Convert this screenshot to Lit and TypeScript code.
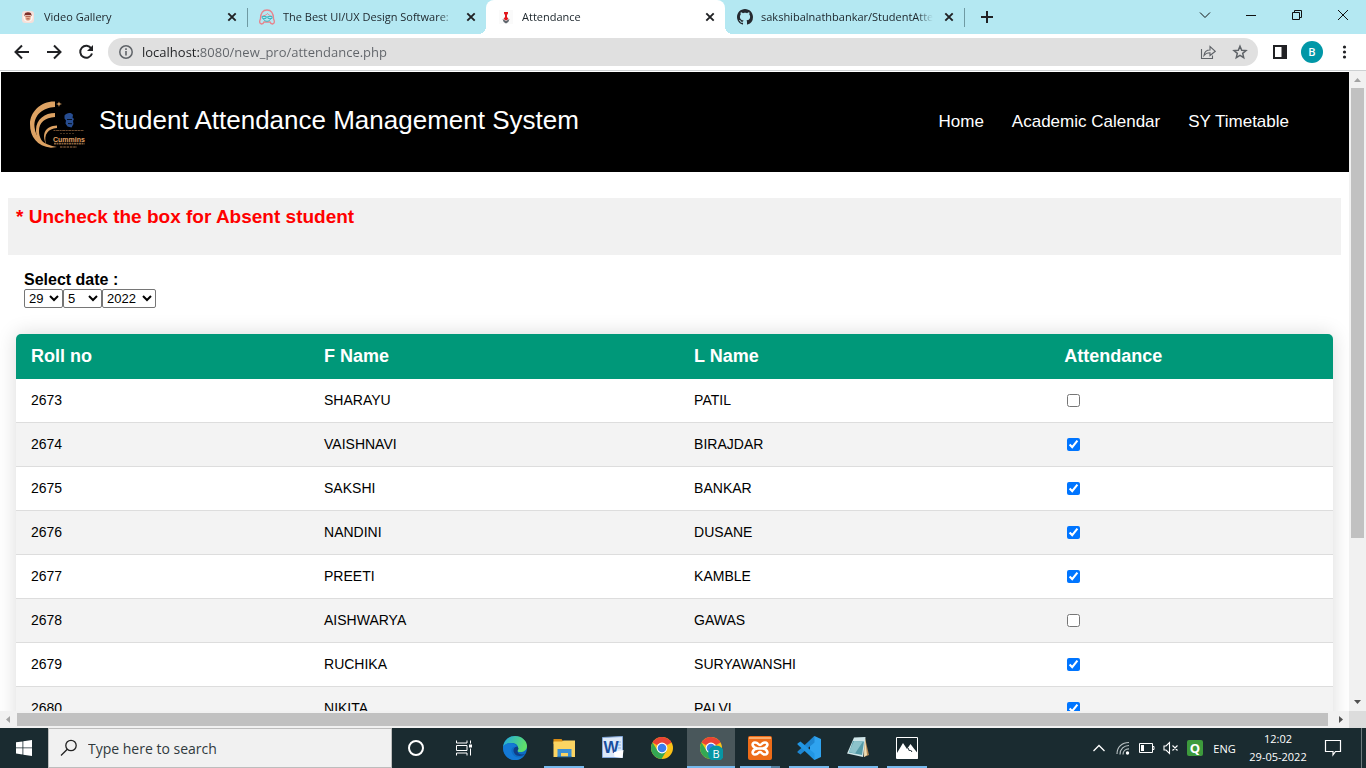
import { LitElement, html, css, svg } from "lit";
import { customElement } from "lit/decorators.js";
import { classMap } from "lit/directives/class-map.js";

const crossIcon = html`<svg width="16" height="16" viewBox="0 0 16 16"><path d="M4.3 4.3l7.4 7.4M11.7 4.3l-7.4 7.4" stroke="#202124" stroke-width="1.9" fill="none"/></svg>`;

const chromeMark = svg`
  <circle cx="12" cy="12" r="11" fill="#fbc116"/>
  <path d="M12 12L2.5 6.4A11 11 0 0 1 21.5 6.5z" fill="#ea4335"/>
  <path d="M2.5 6.5A11 11 0 0 0 11.5 23L16.7 14.5 7.5 14.5z" fill="#34a853"/>
  <path d="M12 6.5H21.5L20 4.5 12 1.5z" fill="#ea4335"/>
  <circle cx="12" cy="12" r="5.4" fill="#fff"/>
  <circle cx="12" cy="12" r="4.3" fill="#3b7ded"/>`;

const tabs = [
  {
    title: "Video Gallery",
    active: false,
    icon: html`<svg width="16" height="16" viewBox="0 0 16 16"><rect x="2" y="2" width="12" height="12" rx="3" fill="#f6dfd9"/><circle cx="8" cy="8" r="4.8" fill="#fdf5f0"/><path d="M4.500 7.500C4 3.800 6 3.300 8.200 3.300c2.700 0 3.700 1.500 3.300 4l-1-1.300H5.500z" fill="#7c2f28"/><path d="M5.300 6.500h5.400v2.600a2.700 2.700 0 0 1-5.400 0z" fill="#e9b193"/><path d="M5.500 7.300h5M6.500 9.800h3" stroke="#9a4238" stroke-width=".8"/></svg>`,
  },
  {
    title: "The Best UI/UX Design Software:",
    active: false,
    icon: html`<svg width="16" height="16" viewBox="0 0 16 16" fill="none"><path d="M2.500 15C-.2 14.500.6 12 1.400 10 1.600 4 4 1 8 1s6.400 3 6.600 9c.8 2 1.600 4.500-1.100 5-1.500-.2-2.200-1-2.500-2H5c-.3 1-1 1.800-2.500 2z" stroke="#e8838c" stroke-width="1.300"/><path d="M3.500 7c2-.3 4-1 5-2.500 1 1.500 2.500 2.200 4 2.500" stroke="#e8838c"/><path d="M3 7.500h4v2H3.500zM9 7.500h4v2H9zM7 8h2M4.500 10c1 3 6 3 7 0" stroke="#3fb9c4" stroke-width="1"/></svg>`,
  },
  {
    title: "Attendance",
    active: true,
    icon: html`<svg width="16" height="16" viewBox="0 0 16 16"><rect x="1" y="1" width="14" height="14" fill="#fafafa"/><path d="M6 3h4v1.500L9 6v2l1.500 2L8 11.500 5.500 10 7 8V6L6 4.500z" fill="#e1151b"/><path d="M4.500 10L8 12l3.500-2-1.200 3L8 14.500 5.700 13z" fill="#5d646b"/></svg>`,
  },
  {
    title: "sakshibalnathbankar/StudentAtte",
    active: false,
    icon: html`<svg width="16" height="16" viewBox="0 0 16 16"><path fill="#24292f" d="M8 0C3.580 0 0 3.580 0 8c0 3.540 2.290 6.530 5.470 7.590.4.070.55-.17.55-.38 0-.19-.01-.82-.01-1.490-2.010.37-2.530-.49-2.690-.94-.09-.23-.48-.94-.82-1.130-.28-.15-.68-.52-.01-.53.63-.01 1.080.58 1.230.82.72 1.210 1.870.87 2.330.66.07-.52.28-.87.51-1.070-1.780-.2-3.640-.89-3.640-3.950 0-.87.31-1.590.82-2.150-.08-.2-.36-1.020.08-2.120 0 0 .67-.21 2.200.82.64-.18 1.320-.27 2-.27s1.360.09 2 .27c1.530-1.040 2.200-.82 2.200-.82.44 1.100.16 1.920.08 2.120.51.56.82 1.270.82 2.150 0 3.070-1.870 3.750-3.650 3.950.29.25.54.73.54 1.480 0 1.070-.01 1.930-.01 2.200 0 .21.15.46.55.38A8.010 8.010 0 0 0 16 8c0-4.420-3.580-8-8-8z"/></svg>`,
  },
];

const windowIcons = [
  ["Search tabs", svg`<path d="M3 5.500l5 5 5-5"/>`],
  ["Minimize", svg`<path d="M3 8.500h10"/>`],
  ["Restore", svg`<path d="M3.500 5.500h7v7h-7zM5.500 5.500v-2h7v7h-2"/>`],
  ["Close", svg`<path d="M3 3l10 10M13 3L3 13"/>`],
] as const;

@customElement("browser-chrome")
class BrowserChrome extends LitElement {
  static styles = css`
    :host { display: block; flex: none; font-family: "Open Sans", sans-serif; }
    button { border: 0; padding: 0; background: none; font: inherit; color: inherit; display: grid; place-items: center; }
    svg { display: block; }
    .strip { display: flex; height: 34px; background: #b4e8f2; padding-left: 8px; }
    .tab { position: relative; display: flex; align-items: center; gap: 8px; flex: 0 1 239px; min-width: 0; box-sizing: border-box; padding: 0 7px 0 12px; font-size: 11px; color: #202a30; }
    .tab.active { background: #fff; border-radius: 8px 8px 0 0; }
    .tab.active::before, .tab.active::after { content: ""; position: absolute; bottom: 0; width: 8px; height: 8px; }
    .tab.active::before { right: 100%; background: radial-gradient(circle at 0 0, transparent 8px, #fff 8px); }
    .tab.active::after { left: 100%; background: radial-gradient(circle at 100% 0, transparent 8px, #fff 8px); }
    .tab.ruled::after { content: ""; position: absolute; right: -1px; top: 8px; width: 1px; height: 19px; background: #6f9aa3; }
    .icon { flex: none; }
    .title { flex: 1; min-width: 0; overflow: hidden; white-space: nowrap; line-height: 20px; mask-image: linear-gradient(to left, transparent, #000 16px); }
    .plus { width: 46px; height: 34px; }
    .controls { display: flex; margin-left: auto; }
    .controls button { width: 46px; height: 29px; }
    .bar { display: flex; align-items: center; height: 36px; padding: 0 6px; border-bottom: 1px solid #cdd0d2; background: #fff; }
    .tool { width: 32px; height: 32px; }
    .pill { display: flex; align-items: center; flex: 1; height: 28px; margin: 0 6px; border-radius: 14px; background: #e0e0e0; padding: 0 2px; }
    .url { flex: 1; min-width: 0; border: 0; outline: 0; padding: 0; height: 24px; font: 13px "Open Sans", sans-serif; color: transparent; background: linear-gradient(90deg, #202124 58px, #5f6368 58px); background-clip: text; -webkit-background-clip: text; -webkit-text-fill-color: transparent; }
    .avatar { width: 22px; height: 22px; border-radius: 50%; background: #0097a7; }
  `;

  render() {
    return html`
      <div class="strip">
        ${tabs.map((t, i) => html`
          <div class=${classMap({ tab: true, active: t.active, ruled: i === 0 || i === 3 })}>
            <span class="icon">${t.icon}</span>
            <span class="title">${t.title}</span>
            <button aria-label="Close tab">${crossIcon}</button>
          </div>`)}
        <button class="plus" aria-label="New tab"><svg width="16" height="16" viewBox="0 0 16 16"><path d="M8 2v12M2 8h12" stroke="#202124" stroke-width="2"/></svg></button>
        <div class="controls">
          ${windowIcons.map(([name, shape]) => html`<button aria-label=${name}><svg width="16" height="16" viewBox="0 0 16 16" fill="none" stroke="#111">${shape}</svg></button>`)}
        </div>
      </div>
      <div class="bar">
        <button class="tool" aria-label="Back"><svg width="18" height="18" viewBox="0 0 18 18" fill="none" stroke="#202124" stroke-width="2"><path d="M16 9H3M9 2.500L2.500 9 9 15.500"/></svg></button>
        <button class="tool" aria-label="Forward"><svg width="18" height="18" viewBox="0 0 18 18" fill="none" stroke="#202124" stroke-width="2"><path d="M2 9h13M9 2.500L15.500 9 9 15.500"/></svg></button>
        <button class="tool" aria-label="Reload"><svg width="18" height="18" viewBox="0 0 18 18"><path d="M14.300 5.500A6 6 0 1 0 15 10.500" fill="none" stroke="#202124" stroke-width="2"/><path d="M16 2v6h-6z" fill="#202124"/></svg></button>
        <div class="pill">
          <button class="tool" aria-label="Site information"><svg width="16" height="16" viewBox="0 0 16 16"><circle cx="8" cy="8" r="6.200" fill="none" stroke="#5f6368" stroke-width="1.500"/><path d="M8 7v4.500M8 4.300V6" stroke="#5f6368" stroke-width="1.600"/></svg></button>
          <input class="url" aria-label="Address" value="localhost:8080/new_pro/attendance.php" />
          <button class="tool" aria-label="Share"><svg width="16" height="16" viewBox="0 0 16 16" fill="none" stroke="#5f6368" stroke-width="1.100"><path d="M1.500 5v9.500h11v-3"/><path d="M4 11.500c.5-4 2.500-5.500 6-5.500V2.500L15.300 7.300 10 11.500V8.800c-3 0-4.500.7-6 2.700z"/></svg></button>
          <button class="tool" aria-label="Bookmark"><svg width="16" height="16" viewBox="0 0 16 16" fill="none" stroke="#5f6368" stroke-width="1.500"><path d="M8 2.200l1.700 4 4.300.4-3.300 2.800 1 4.300L8 11.400l-3.700 2.300 1-4.300L2 6.600l4.300-.4z"/></svg></button>
        </div>
        <button class="tool" aria-label="Side panel"><svg width="16" height="16" viewBox="0 0 16 16"><path d="M2 2h12v12H2z" fill="none" stroke="#202124" stroke-width="2"/><path d="M9.500 2H14v12H9.500z" fill="#202124"/></svg></button>
        <button class="tool" aria-label="Profile"><span class="avatar"><svg width="22" height="22"><text x="11" y="15" text-anchor="middle" font-size="11" font-weight="600" fill="#fff">B</text></svg></span></button>
        <button class="tool" aria-label="Menu"><svg width="16" height="16" viewBox="0 0 16 16" fill="#202124"><circle cx="8.500" cy="3" r="1.600"/><circle cx="8.500" cy="8" r="1.600"/><circle cx="8.500" cy="13" r="1.600"/></svg></button>
      </div>`;
  }
}

const students: [number, string, string, boolean][] = [
  [2673, "SHARAYU", "PATIL", false],
  [2674, "VAISHNAVI", "BIRAJDAR", true],
  [2675, "SAKSHI", "BANKAR", true],
  [2676, "NANDINI", "DUSANE", true],
  [2677, "PREETI", "KAMBLE", true],
  [2678, "AISHWARYA", "GAWAS", false],
  [2679, "RUCHIKA", "SURYAWANSHI", true],
  [2680, "NIKITA", "PALVI", true],
];

@customElement("attendance-page")
class AttendancePage extends LitElement {
  static styles = css`
    :host { display: block; font-family: "Liberation Sans", Arial, sans-serif; color: #000; }
    header { display: flex; align-items: center; height: 100px; margin: 1px 0 0 1px; padding: 0 60px 0 28px; background: #000; color: #fff; }
    .logo { display: block; flex: none; margin-right: 12px; }
    h1 { margin: 0; font-size: 26px; font-weight: 400; line-height: 30px; padding-bottom: 4px; white-space: nowrap; }
    nav { display: flex; gap: 28px; margin-left: auto; }
    nav a { color: #fff; text-decoration: none; font-size: 17px; line-height: 20px; white-space: nowrap; }
    .notice { margin: 26px 8px 0; height: 49px; padding: 8px 8px 0; background: #f1f1f1; }
    .notice h2 { margin: 0; color: #f00; font-size: 19px; line-height: 22px; }
    .date { margin: 16px 24px 26px; }
    .label { font-weight: 700; font-size: 16px; line-height: 18px; display: block; }
    .picks { display: flex; }
    select { height: 19px; width: 39px; font: 13px "Liberation Sans", Arial, sans-serif; color: #000; background: #fff; border: 1px solid #767676; border-radius: 2px; padding: 0; }
    .year { width: 54px; }
    .sheet { margin: 0 16px; border-radius: 5px 5px 0 0; overflow: hidden; box-shadow: 0 0 20px rgba(0, 0, 0, 0.15); }
    table { width: 100%; border-collapse: separate; border-spacing: 0; table-layout: fixed; font-size: 14px; }
    th, td { text-align: left; padding: 0 15px; box-sizing: border-box; }
    th { height: 45px; font-size: 18px; background: #009879; color: #fff; }
    td { height: 44px; padding-bottom: 1px; border-bottom: 1px solid #ddd; }
    tr.even { background: #f3f3f3; }
    .c1 { width: 22.25%; }
    .c2 { width: 28.1%; }
    input { display: block; width: 13px; height: 13px; margin: 1px 3px 0; }
  `;

  render() {
    return html`
      <header>
        <svg class="logo" width="58" height="60" viewBox="29 92 58 60" role="img" aria-label="Cummins College logo">
          <g fill="#dda263">
            <path d="M55 101.500v5.500C43 107.500 33.500 115 34.500 127c1 11 9 18 22.500 20l-6 .8C37 146 30 137 30 124c0-12 11-23 25-22.500z"/>
            <path d="M55 113v4c-10 .5-16 5.500-16 14 0 6 2.500 11 8.500 15.500C39 142.500 36 137 36 130c0-11 9-17 19-17z"/>
            <path d="M57 125.500v2.500c-9 1-13.500 6-11 16-4.500-10-1-18 11-18.500z"/>
            <path d="M59 101.500l.7 1.700 2.300.8-2.300.8-.7 2.200-.8-2.200-2.200-.8 2.200-.8z"/>
          </g>
          <path d="M53.500 130.500h30" stroke="#6f4d30" stroke-dasharray="2 .6 3 .5" stroke-width="1.200"/>
          <path d="M60 133.500h14" stroke="#46341f" stroke-dasharray="2 1"/>
          <path d="M54 143.700h30.500" stroke="#8a623c" stroke-dasharray="2.500 .5 1.500 .5" stroke-width="1.700"/>
          <path d="M60 147h17" stroke="#6d4e32" stroke-dasharray="2.500 .8" stroke-width="1.700"/>
          <text x="53" y="141.500" font-family="Liberation Sans" font-weight="700" font-size="7" fill="#e0a466">Cummins</text>
          <path d="M64.500 115.500c2-3 7-3.500 8.500-.5l-.5 2.500 1.500 1.500-1 2 .5 3-2 3.500-4-1-2-3 .5-3-1.500-2z" fill="#274d91"/>
          <path d="M67 119.500h5M68 123.500l4 .3" stroke="#08111f" stroke-width="1"/>
        </svg>
        <h1>Student Attendance Management System</h1>
        <nav><a href="#home">Home</a><a href="#calendar">Academic Calendar</a><a href="#timetable">SY Timetable</a></nav>
      </header>
      <div class="notice"><h2>* Uncheck the box for Absent student</h2></div>
      <div class="date">
        <label class="label" for="day">Select date :</label>
        <div class="picks">
          <select id="day"><option>29</option></select>
          <select aria-label="Month"><option>5</option></select>
          <select class="year" aria-label="Year"><option>2022</option></select>
        </div>
      </div>
      <div class="sheet">
        <table>
          <thead><tr><th class="c1">Roll no</th><th class="c2">F Name</th><th class="c2">L Name</th><th>Attendance</th></tr></thead>
          <tbody>
            ${students.map(([roll, first, last, present], i) => html`
              <tr class=${i % 2 ? "even" : "odd"}>
                <td>${roll}</td><td>${first}</td><td>${last}</td>
                <td><input type="checkbox" aria-label="Roll ${roll} present" .checked=${present} /></td>
              </tr>`)}
          </tbody>
        </table>
      </div>`;
  }
}

const apps = [
  { name: "Microsoft Edge", open: false, art: svg`<defs><linearGradient id="edgeTop" x1="0" y1="0" x2="1" y2=".3"><stop offset="0" stop-color="#1fa7e4"/><stop offset="1" stop-color="#5fe06a"/></linearGradient></defs><circle cx="12" cy="12" r="12" fill="#0d6cc4"/><path d="M0 11C1 4 6 0 12 0c7 0 12 5 12 10 0 4-3 6-7 6-2.500 0-3-1-2-2.500C16 9 12 6.500 8 7 4 7.300 1.500 9 0 11z" fill="url(#edgeTop)"/><path d="M0 11c3-5 11-5.500 14 0-4-1.500-7 2-5 6 2 4.500 7 6 12 3-5 6-14 5-18 0C1 17.500 0 14.500 0 11z" fill="#1479d5"/><path d="M14.500 10.500c-4 0-5 4-3 7 2.500 3.500 7.500 3 10.500.5-3 1-7 .5-7.500-2.500-.2-1.500 1-2 1-3z" fill="#103e86"/>` },
  { name: "File Explorer", open: true, art: svg`<path d="M1.500 3h8l1.500 2v3H1.500z" fill="#d98c14"/><path d="M1.500 5.500H10L11.500 4.500H23V21H1.500z" fill="#fbd462"/><path d="M5.500 13h14v8H16v-4H9v4H5.500z" fill="#3c90d4"/><path d="M5.500 20.800h14" stroke="#276ca8"/>` },
  { name: "Word", open: false, art: svg`<path d="M1.500 1.500L21.500.5v21h-20z" fill="#dce9f9" stroke="#85a9dc"/><path d="M17 6h3M17 9h3M17 12h3" stroke="#8db1e2"/><text x="2.500" y="16.500" font-family="Liberation Sans" font-weight="700" font-size="16" fill="#174d9e">W</text><path d="M13 16l9.500-2-1 8-8-1z" fill="#fff"/>` },
  { name: "Chrome", open: false, art: chromeMark },
  { name: "Chrome profile B", open: true, active: true, art: svg`${chromeMark}<circle cx="17" cy="17.500" r="8" fill="#0796a4"/><text x="17" y="21.500" text-anchor="middle" font-family="Open Sans" font-size="11" fill="#fff">B</text>` },
  { name: "XAMPP", open: true, stacked: true, art: svg`<rect x="0" y="0" width="24" height="24" rx="2" fill="#ed6c19"/><path d="M1 2h22" stroke="#f8ad6d" stroke-width="2"/><path d="M9.500 12.500c-6-1-6-6-2.500-6s3 2.500 5 2.500 1.500-2.500 5-2.500 3.500 5-2.500 6c6 1 6 6 2.500 6s-3-2.500-5-2.500-1.500 2.500-5 2.500-3.500-5 2.500-6h5" fill="none" stroke="#fff" stroke-width="2.600"/>` },
  { name: "Visual Studio Code", open: true, art: svg`<path d="M17.500 0L24 3v18l-6.500 3-4.500-4.500V4.500z" fill="#2fa3ef"/><path d="M17.500 0v6.500L3.500 18.500.5 16.500v-1z" fill="#1e86d1"/><path d="M17.500 24v-6.500L3.500 5.500.5 7.500v1z" fill="#2196e3"/>` },
  { name: "Notepad", open: true, art: svg`<path d="M19 2l4 17-5 2L16 3z" fill="#b58a55"/><path d="M19 2l2 17-3 2z" fill="#f0dfb7"/><path d="M8 1.500L19.500 1 17 21 1 17.500z" fill="#cfe6e9"/><path d="M7 5l11 .5L16 19 3 16.500z" fill="#559ba8"/><path d="M8 5l9 .5-8 12-6-1.500z" fill="#8cc2ca"/>` },
  { name: "Photos", open: true, art: svg`<path d="M1.500 1.500h21v21h-21z" fill="#16262b" stroke="#fff"/><path d="M2 17l6-10 4 6 1-1.500 2.500-3.500 3 4 4 5v6H2z" fill="#fff"/><path d="M13 12l1.500 3 1-1 1.500 2" stroke="#16262b" fill="none"/>` },
];

@customElement("task-bar")
class TaskBar extends LitElement {
  static styles = css`
    :host { display: flex; flex: none; height: 40px; background: #1a2b30; color: #fff; font-family: "Open Sans", sans-serif; }
    button { border: 0; padding: 0; background: none; color: inherit; font: inherit; display: grid; place-items: center; height: 40px; width: 48px; }
    svg { display: block; }
    .search { display: flex; align-items: center; flex: 0 1 344px; box-sizing: border-box; border: 1px solid #bdbdbd; background: #f1f1f1; padding: 0 11px; gap: 10px; }
    .search svg { flex: none; }
    .search input { flex: 1; min-width: 0; border: 0; outline: 0; background: none; padding: 0; font: 14px "Open Sans", sans-serif; color: #303a3d; }
    .search input::placeholder { color: #303a3d; opacity: 1; }
    .apps { display: flex; gap: 1px; margin-left: 3px; }
    .app { position: relative; }
    .app.active { background: #49575b; }
    .app.open::after { content: ""; position: absolute; left: 4px; right: 4px; bottom: 0; height: 2px; background: #76b9ed; }
    .app.active::after { left: 0; right: 0; }
    .app.stacked::after { background: linear-gradient(to left, #527f9f 9px, #76b9ed 9px); }
    .tray { display: flex; align-items: center; margin-left: auto; }
    .tray .mini { width: 24px; }
    .tray .lang { width: 35px; font-size: 11px; }
    .clock { display: block; width: 70px; margin-left: 1px; font-size: 11px; line-height: 18px; text-align: center; white-space: nowrap; }
    .tray .note { width: 40px; }
    .desk { width: 4px; height: 40px; margin-left: 8px; border-left: 1px solid #6e7a7d; }
  `;

  render() {
    return html`
      <button aria-label="Start"><svg width="16" height="16" viewBox="0 0 16 16" fill="#fff"><path d="M0 2.300l6.500-.9v6.100H0zM7.300 1.300L16 0v7.500H7.300zM0 8.300h6.500v6.200L0 13.600zM7.300 8.300H16V16l-8.700-1.300z"/></svg></button>
      <label class="search">
        <svg width="18" height="18" viewBox="0 0 18 18" fill="none" stroke="#222" stroke-width="1.300"><circle cx="11" cy="6.500" r="5.200"/><path d="M7.300 10.300L1 16.500"/></svg>
        <input aria-label="Search" placeholder="Type here to search" />
      </label>
      <button aria-label="Cortana"><svg width="18" height="18" viewBox="0 0 18 18"><circle cx="9" cy="9" r="7" fill="none" stroke="#fff" stroke-width="2"/></svg></button>
      <button aria-label="Task view"><svg width="18" height="18" viewBox="0 0 18 18" fill="none" stroke="#fff"><path d="M1.500 1.500v2.500h10.500V1.500M1.500 6.500h10.500v5H1.500zM1.500 16.500V14h10.500v2.500M15.500 1.500v3M15.500 9.500v7"/><path d="M14 5.500h3v3h-3z" fill="#fff" stroke="none"/></svg></button>
      <div class="apps">
        ${apps.map((a) => html`<button class=${classMap({ app: true, open: a.open, active: !!a.active, stacked: !!a.stacked })} aria-label=${a.name}><svg width="24" height="24" viewBox="0 0 24 24">${a.art}</svg></button>`)}
      </div>
      <div class="tray">
        <button class="mini" aria-label="Show hidden icons"><svg width="14" height="14" viewBox="0 0 14 14" fill="none" stroke="#fff" stroke-width="1.300"><path d="M1.500 10L7 4.500l5.500 5.500"/></svg></button>
        <button class="mini" aria-label="Network"><svg width="14" height="14" viewBox="0 0 14 14" fill="none" stroke="#b8c1c3" stroke-width="1.200"><path d="M1 13C1 6 6 1.500 13 1.500M4 13.500C4 8 8 4.500 13 4.500M7 13.500C7 10 9.500 7.800 13 7.800"/><circle cx="11.500" cy="12" r="1.700" fill="#fff" stroke="none"/></svg></button>
        <button class="mini" aria-label="Battery"><svg width="16" height="12" viewBox="0 0 16 12" fill="none" stroke="#fff"><path d="M.5 1.500h13v9H.5zM13.500 4.500h1.500v3h-1.500"/><path d="M2 3h3v6H2z" fill="#fff" stroke="none"/></svg></button>
        <button class="mini" aria-label="Volume muted"><svg width="16" height="14" viewBox="0 0 16 14" fill="none" stroke="#fff" stroke-width="1.100"><path d="M1 5h2l3.500-3.500v11L3 9H1zM9.500 4.500l5 5M14.500 4.500l-5 5"/></svg></button>
        <button class="mini" aria-label="Quick Heal"><svg width="16" height="16" viewBox="0 0 16 16"><rect width="16" height="16" rx="2" fill="#3d9a3c"/><text x="8" y="12.500" text-anchor="middle" font-family="Open Sans" font-weight="700" font-size="13" fill="#fff">Q</text></svg></button>
        <button class="lang">ENG</button>
        <time class="clock">12:02<br />29-05-2022</time>
        <button class="note" aria-label="Notifications"><svg width="18" height="18" viewBox="0 0 18 18" fill="none" stroke="#fff" stroke-width="1.200"><path d="M1.500 1.500h15v11h-5L9 16V12.500H1.500z"/></svg></button>
        <span class="desk"></span>
      </div>`;
  }
}

@customElement("app-root")
class AppRoot extends LitElement {
  static styles = css`
    :host { display: flex; flex-direction: column; height: 100vh; overflow: hidden; background: #fff; }
    .view { flex: 1; min-height: 0; display: grid; grid-template-columns: minmax(0, 1fr) 17px; grid-template-rows: minmax(0, 1fr) 17px; }
    .page { overflow: hidden; }
    .rail { display: flex; background: #f1f1f1; }
    .rail.tall { flex-direction: column; }
    .cap { flex: none; width: 17px; height: 17px; display: block; }
    .track { flex: 1; min-width: 0; min-height: 0; }
    .thumb { background: #c1c1c1; }
    .tall .thumb { margin: 0 2px; height: 74.3%; }
    .wide .thumb { margin: 2px 0; height: 13px; width: 99.7%; }
    .corner { background: #dcdcdc; }
  `;

  cap(d: string, color: string) {
    return html`<svg class="cap" viewBox="0 0 17 17"><path d=${d} fill=${color}/></svg>`;
  }

  render() {
    return html`
      <browser-chrome></browser-chrome>
      <div class="view">
        <div class="page"><attendance-page></attendance-page></div>
        <div class="rail tall">
          ${this.cap("M5 11h7L8.500 7z", "#a3a3a3")}
          <div class="track"><div class="thumb"></div></div>
          ${this.cap("M5 6h7L8.500 10z", "#505050")}
        </div>
        <div class="rail wide">
          ${this.cap("M10 5v7L6 8.500z", "#a3a3a3")}
          <div class="track"><div class="thumb"></div></div>
          ${this.cap("M7 5v7l4-3.500z", "#505050")}
        </div>
        <div class="corner"></div>
      </div>
      <task-bar></task-bar>`;
  }
}
